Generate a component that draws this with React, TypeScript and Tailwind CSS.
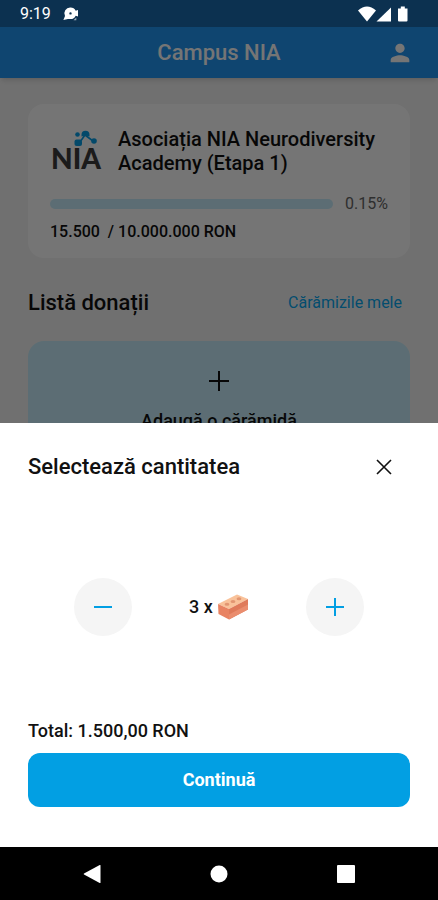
import { useState } from 'react';

const UNIT_PRICE = 500;

const formatAmount = (value: number) =>
  value.toString().replace(/\B(?=(\d{3})+$)/g, '.');

const StatusBar = () => (
  <div className="relative z-20 flex h-[27px] shrink-0 items-center justify-between bg-[#0c3150] pl-5 pr-7 text-white">
    <div className="flex items-center gap-3">
      <span className="text-base leading-6">9:19</span>
      <svg viewBox="0 0 16 14" className="h-[14px] w-4" fill="currentColor" aria-hidden="true">
        <path
          fillRule="evenodd"
          d="M7.5 0.5a5.8 5.8 0 0 1 5.2 3.2l2.3-.8v6.6l-2.3-.8A5.8 5.8 0 0 1 7.5 12.1L5 12l-4.6 1L2 9A5.8 5.8 0 0 1 7.5 0.5ZM7.5 5.2a1.2 1.2 0 1 0 0 2.4A1.2 1.2 0 0 0 7.5 5.2Z"
        />
        <path d="M10.5 13.3l2.8-2.8v2.8z" opacity="0.6" />
      </svg>
    </div>
    <svg viewBox="0 0 52 18" className="h-[18px] w-[52px]" fill="currentColor" aria-hidden="true">
      <path d="M0 5.5Q9-2.5 18 5.5L9 16.5z" />
      <path d="M33 2.5V16.5H18.5z" />
      <path d="M40 3.5h2.8V1.5h4v2h2.7V15.5q0 1-1 1H41q-1 0-1-1z" />
    </svg>
  </div>
);

const Logo = () => (
  <svg viewBox="0 0 52 50" className="h-[50px] w-[52px] shrink-0" role="img" aria-label="NIA">
    <g fill="#08a0e8">
      <path d="M30 16L35 9L43 15" fill="none" stroke="#08a0e8" strokeWidth="1.6" />
      <rect x="24.5" y="13.5" width="7.5" height="6.5" rx="2" />
      <circle cx="27.5" cy="8.5" r="2.3" />
      <path d="M31.5 10.5V8.8A3.9 3.9 0 0 1 39.5 8.8V10.5L35.5 9.5z" />
      <circle cx="44" cy="15" r="2.8" />
    </g>
    <text x="1" y="43" fontSize="28" fontWeight="900" fontFamily="Lato, sans-serif" fill="#3c3c3c">
      NIA
    </text>
  </svg>
);

const Brick = () => (
  <svg viewBox="0 0 32 26" className="h-[26px] w-8" aria-hidden="true">
    <path d="M1 10L20 .5L31 5L12 15z" fill="#f9c29a" />
    <path d="M1 10L12 15V25.5L1.5 20z" fill="#e88362" />
    <path d="M12 15L31 5V15.5L12 25.5z" fill="#df7a5a" />
    <path d="M12 20.5L31 10.5V15.5L12 25.5z" fill="#ea8d6e" />
    <g fill="#e29672">
      <ellipse cx="10" cy="10.3" rx="2.4" ry="1.5" />
      <ellipse cx="16" cy="7.6" rx="2.4" ry="1.5" />
      <ellipse cx="22" cy="4.8" rx="2.4" ry="1.5" />
    </g>
  </svg>
);

const Header = () => (
  <header className="relative flex h-[51px] shrink-0 items-center justify-center bg-[#2196f3] shadow-md">
    <h1 className="text-[22px] font-medium text-white">Campus NIA</h1>
    <button type="button" aria-label="Profil" className="absolute right-6 text-white">
      <svg viewBox="0 0 24 24" className="size-7" fill="currentColor" aria-hidden="true">
        <path d="M12 12c2.2 0 4-1.8 4-4s-1.8-4-4-4-4 1.8-4 4 1.8 4 4 4zm0 2c-2.7 0-8 1.3-8 4v2h16v-2c0-2.7-5.3-4-8-4z" />
      </svg>
    </button>
  </header>
);

const CampaignCard = () => (
  <section className="rounded-2xl bg-white px-[22px] pb-[14px] pt-[22px]">
    <div className="flex items-center gap-4">
      <Logo />
      <h2 className="text-xl font-medium leading-6">Asociația NIA Neurodiversity Academy (Etapa 1)</h2>
    </div>
    <div className="mt-4 flex items-center gap-3">
      <div className="h-[10px] flex-1 rounded-full bg-[#c8eefc]" />
      <span className="text-base leading-6 text-[#666666]">0.15%</span>
    </div>
    <p className="mt-1 whitespace-pre text-base font-medium leading-6">15.500  / 10.000.000 RON</p>
  </section>
);

interface RoundButtonProps {
  label: string;
  path: string;
  onClick: () => void;
}

const RoundButton = ({ label, path, onClick }: RoundButtonProps) => (
  <button
    type="button"
    aria-label={label}
    onClick={onClick}
    className="flex size-[58px] items-center justify-center rounded-full bg-[#f5f5f5]"
  >
    <svg viewBox="0 0 20 20" className="size-5" fill="none" stroke="#029fe3" strokeWidth="2" aria-hidden="true">
      <path d={path} />
    </svg>
  </button>
);

const QuantitySheet = () => {
  const [quantity, setQuantity] = useState(3);

  return (
    <section
      role="dialog"
      aria-labelledby="sheet-title"
      className="absolute inset-x-0 bottom-0 z-20 bg-white px-7 pb-10 pt-6"
    >
      <div className="flex items-center justify-between pr-[14px]">
        <h2 id="sheet-title" className="text-[22px] font-medium leading-10">Selectează cantitatea</h2>
        <button type="button" aria-label="Închide" className="p-1">
          <svg viewBox="0 0 16 16" className="size-4" fill="none" stroke="currentColor" strokeWidth="1.6" aria-hidden="true">
            <path d="M1 1l14 14M15 1L1 15" />
          </svg>
        </button>
      </div>
      <div className="flex items-center justify-between px-[46px] pb-[83px] pt-[91px]">
        <RoundButton label="Scade" path="M1 10h18" onClick={() => setQuantity(Math.max(1, quantity - 1))} />
        <div className="flex items-center gap-1">
          <span className="text-lg font-medium">{quantity} x</span>
          <Brick />
        </div>
        <RoundButton label="Adaugă" path="M1 10h18M10 1v18" onClick={() => setQuantity(quantity + 1)} />
      </div>
      <p className="text-lg font-medium leading-6">Total: {formatAmount(quantity * UNIT_PRICE)},00 RON</p>
      <button type="button" className="mt-[10px] h-[54px] w-full rounded-xl bg-[#029fe3] text-lg font-bold text-white">
        Continuă
      </button>
    </section>
  );
};

const NavigationBar = () => (
  <nav className="flex h-[53px] shrink-0 items-center justify-between bg-black px-20 text-white">
    <button type="button" aria-label="Înapoi">
      <svg viewBox="0 0 24 24" className="size-6" fill="currentColor" aria-hidden="true">
        <path d="M20.5 3.5v17q0 .8-.8.4L4 12.6q-.8-.6 0-1.2L19.7 3q.8-.3.8.5z" />
      </svg>
    </button>
    <button type="button" aria-label="Acasă">
      <svg viewBox="0 0 24 24" className="size-6" fill="currentColor" aria-hidden="true">
        <circle cx="12" cy="12" r="8.5" />
      </svg>
    </button>
    <button type="button" aria-label="Recente">
      <svg viewBox="0 0 24 24" className="size-6" fill="currentColor" aria-hidden="true">
        <rect x="3" y="3" width="18" height="18" rx="1" />
      </svg>
    </button>
  </nav>
);

export default function App() {
  return (
    <div className="flex h-screen flex-col overflow-hidden bg-[#f5f5f5] font-['Roboto',sans-serif] text-[#111111]">
      <StatusBar />
      <div className="relative flex min-h-0 flex-1 flex-col overflow-hidden">
        <Header />
        <main className="px-7 pt-[26px]">
          <CampaignCard />
          <div className="flex items-center justify-between pb-[26px] pt-[33px] pr-2">
            <h2 className="text-[22px] font-medium leading-6">Listă donații</h2>
            <a href="#caramizi" className="text-base leading-6 text-[#08a8f0]">Cărămizile mele</a>
          </div>
          <button type="button" className="flex w-full flex-col items-center rounded-2xl bg-[#c8eefc] pb-7 pt-[30px]">
            <svg viewBox="0 0 20 20" className="size-5" fill="none" stroke="currentColor" strokeWidth="2" aria-hidden="true">
              <path d="M0 10h20M10 0v20" />
            </svg>
            <span className="mt-4 text-lg font-medium leading-7">Adaugă o cărămidă</span>
          </button>
        </main>
        <div className="absolute inset-0 z-10 bg-black/54" />
        <QuantitySheet />
      </div>
      <NavigationBar />
    </div>
  );
}
